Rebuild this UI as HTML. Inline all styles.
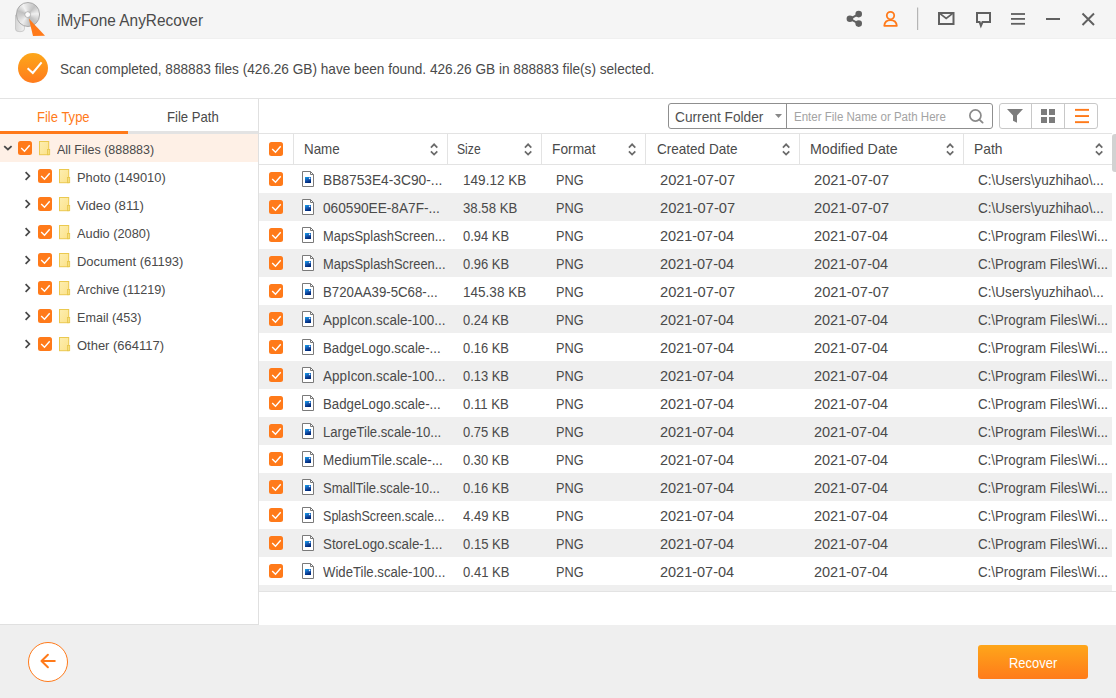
<!DOCTYPE html>
<html><head><meta charset="utf-8"><style>
*{margin:0;padding:0;box-sizing:border-box}
html,body{width:1116px;height:698px;overflow:hidden;background:#efefef;font-family:"Liberation Sans",sans-serif;color:#333}
.a{position:absolute;white-space:nowrap}
svg.a{display:block}
.t{position:absolute;white-space:nowrap;line-height:1;transform-origin:0 0}
</style></head><body>
<div class="a" style="left:0px;top:0px;width:1116px;height:39px;background:#f5f5f5;"></div>
<div class="a" style="left:0px;top:38px;width:1116px;height:1px;background:#f0f0f0;"></div>
<svg class="a" style="left:12px;top:0px" width="36" height="38" viewBox="12 0 36 38">
<defs><linearGradient id="stem" x1="0" y1="0" x2="1" y2="0"><stop offset="0" stop-color="#d4d4d4"/><stop offset="1" stop-color="#f2f2f2"/></linearGradient></defs>
<path d="M15.5 15 V29 Q15.5 31.6 19 31.6 H21 Q24.4 31.6 24.4 29 V22 Z" fill="url(#stem)" stroke="#bdbdbd" stroke-width="0.7"/>
</svg>
<div class="a" style="left:15.5px;top:2.4px;width:24.4px;height:24.4px;border-radius:50%;border:0.6px solid #a9a9a9;background:conic-gradient(from 0deg,#dcdcdc,#c2c2c2 40deg,#f0f0f0 85deg,#c6c6c6 130deg,#b9b9b9 160deg,#eeeeee 215deg,#cfcfcf 260deg,#c0c0c0 290deg,#f3f3f3 330deg,#dcdcdc)"></div>
<svg class="a" style="left:12px;top:0px" width="36" height="38" viewBox="12 0 36 38">
<circle cx="27.7" cy="14.6" r="2.9" fill="#fafafa" stroke="#a0a0a0" stroke-width="0.7"/>
<path d="M28.8 18.6 L33 36 L45 35.8 Z" fill="#ff7a1a"/>
</svg>
<svg class="a" style="left:840px;top:0px" width="276" height="38" viewBox="840 0 276 38">
<g fill="#606060"><circle cx="858.7" cy="14.1" r="3.3"/><circle cx="849.9" cy="18.8" r="3.3"/><circle cx="858.7" cy="23.6" r="3.3"/></g>
<path d="M858.7 14.1 L849.9 18.8 L858.7 23.6" fill="none" stroke="#606060" stroke-width="1.9"/>
<circle cx="890.5" cy="15.6" r="3.7" fill="none" stroke="#ff7a1a" stroke-width="1.8"/>
<path d="M884.3 25.8 Q884.8 20.2 890.5 20.2 Q896.2 20.2 896.8 25.8 Z" fill="none" stroke="#ff7a1a" stroke-width="1.8" stroke-linejoin="round"/>
<rect x="917" y="7.5" width="1.2" height="22.5" fill="#b5b5b5"/>
<rect x="939" y="13" width="14.5" height="11" fill="none" stroke="#606060" stroke-width="2"/>
<path d="M940 13.6 L946.2 18.4 L952.4 13.6" fill="none" stroke="#606060" stroke-width="1.8"/>
<path d="M977 13 H990 V22 H982.5 L980.9 25.8 L979.6 22 H977 Z" fill="none" stroke="#606060" stroke-width="2" stroke-linejoin="miter"/>
<g fill="#606060"><rect x="1011" y="13.1" width="14" height="1.8"/><rect x="1011" y="18" width="14" height="1.8"/><rect x="1011" y="22.9" width="14" height="1.8"/></g>
<rect x="1046" y="18" width="14" height="2" fill="#606060"/>
<path d="M1082.5 13.5 L1094 25 M1094 13.5 L1082.5 25" stroke="#606060" stroke-width="2"/>
</svg>
<div class="a" style="left:0px;top:39px;width:1116px;height:59px;background:#fff;"></div>
<div class="a" style="left:0px;top:98px;width:1116px;height:1px;background:#e3e3e3;"></div>
<div class="a" style="left:18px;top:53px;width:30px;height:30px;border-radius:50%;background:linear-gradient(#fda71a,#ff7b1c)"></div>
<svg class="a" style="left:18px;top:53px" width="30" height="30" viewBox="0 0 30 30"><path d="M9.6 15.2 L14.8 20 L23.6 9.3" fill="none" stroke="#fff" stroke-width="2"/></svg>
<div class="a" style="left:0px;top:99px;width:258px;height:525px;background:#fff;"></div>
<div class="a" style="left:258px;top:99px;width:1px;height:526px;background:#e0e0e0;"></div>
<div class="a" style="left:0px;top:624px;width:258px;height:1px;background:#e0e0e0;"></div>
<div class="a" style="left:128px;top:131px;width:130px;height:3px;background:#e3e3e3;"></div>
<div class="a" style="left:0px;top:131px;width:128px;height:3px;background:#ff7a1a;"></div>
<div class="a" style="left:0px;top:134px;width:258px;height:28px;background:#fef0e6;"></div>
<svg class="a" style="left:3px;top:144px" width="10" height="8" viewBox="0 0 10 8"><path d="M1.2 2.2 L4.9 5.5 L8.6 2.2" fill="none" stroke="#484848" stroke-width="1.8"/></svg>
<div class="a" style="left:18px;top:141px;width:14px;height:14px"><svg width="14" height="14" viewBox="0 0 14 14" style="display:block"><rect width="14" height="14" rx="2.5" fill="#ff7a1a"/><path d="M3.2 7.1 L6.5 10.3 L11.7 4.3" fill="none" stroke="#fff" stroke-width="1.4"/></svg></div>
<div class="a" style="left:39px;top:141px;width:12px;height:15px"><svg width="12" height="15" viewBox="0 0 12 15" style="display:block"><defs><linearGradient id="fg" x1="0" y1="0" x2="1" y2="1"><stop offset="0" stop-color="#fdeeb0"/><stop offset="1" stop-color="#fce28a"/></linearGradient></defs><rect x="0.5" y="0.5" width="9.2" height="13.2" fill="url(#fg)" stroke="#ebc94f"/><rect x="8.5" y="8.5" width="2.2" height="5.2" fill="#f7de7c" stroke="#e6c64c" stroke-width="0.8"/></svg></div>
<svg class="a" style="left:24px;top:171px" width="8" height="10" viewBox="0 0 8 10"><path d="M1.6 1.1 L5.4 5 L1.6 8.9" fill="none" stroke="#484848" stroke-width="1.7"/></svg>
<div class="a" style="left:38px;top:169px;width:14px;height:14px"><svg width="14" height="14" viewBox="0 0 14 14" style="display:block"><rect width="14" height="14" rx="2.5" fill="#ff7a1a"/><path d="M3.2 7.1 L6.5 10.3 L11.7 4.3" fill="none" stroke="#fff" stroke-width="1.4"/></svg></div>
<div class="a" style="left:59px;top:169px;width:12px;height:15px"><svg width="12" height="15" viewBox="0 0 12 15" style="display:block"><defs><linearGradient id="fg" x1="0" y1="0" x2="1" y2="1"><stop offset="0" stop-color="#fdeeb0"/><stop offset="1" stop-color="#fce28a"/></linearGradient></defs><rect x="0.5" y="0.5" width="9.2" height="13.2" fill="url(#fg)" stroke="#ebc94f"/><rect x="8.5" y="8.5" width="2.2" height="5.2" fill="#f7de7c" stroke="#e6c64c" stroke-width="0.8"/></svg></div>
<svg class="a" style="left:24px;top:199px" width="8" height="10" viewBox="0 0 8 10"><path d="M1.6 1.1 L5.4 5 L1.6 8.9" fill="none" stroke="#484848" stroke-width="1.7"/></svg>
<div class="a" style="left:38px;top:197px;width:14px;height:14px"><svg width="14" height="14" viewBox="0 0 14 14" style="display:block"><rect width="14" height="14" rx="2.5" fill="#ff7a1a"/><path d="M3.2 7.1 L6.5 10.3 L11.7 4.3" fill="none" stroke="#fff" stroke-width="1.4"/></svg></div>
<div class="a" style="left:59px;top:197px;width:12px;height:15px"><svg width="12" height="15" viewBox="0 0 12 15" style="display:block"><defs><linearGradient id="fg" x1="0" y1="0" x2="1" y2="1"><stop offset="0" stop-color="#fdeeb0"/><stop offset="1" stop-color="#fce28a"/></linearGradient></defs><rect x="0.5" y="0.5" width="9.2" height="13.2" fill="url(#fg)" stroke="#ebc94f"/><rect x="8.5" y="8.5" width="2.2" height="5.2" fill="#f7de7c" stroke="#e6c64c" stroke-width="0.8"/></svg></div>
<svg class="a" style="left:24px;top:227px" width="8" height="10" viewBox="0 0 8 10"><path d="M1.6 1.1 L5.4 5 L1.6 8.9" fill="none" stroke="#484848" stroke-width="1.7"/></svg>
<div class="a" style="left:38px;top:225px;width:14px;height:14px"><svg width="14" height="14" viewBox="0 0 14 14" style="display:block"><rect width="14" height="14" rx="2.5" fill="#ff7a1a"/><path d="M3.2 7.1 L6.5 10.3 L11.7 4.3" fill="none" stroke="#fff" stroke-width="1.4"/></svg></div>
<div class="a" style="left:59px;top:225px;width:12px;height:15px"><svg width="12" height="15" viewBox="0 0 12 15" style="display:block"><defs><linearGradient id="fg" x1="0" y1="0" x2="1" y2="1"><stop offset="0" stop-color="#fdeeb0"/><stop offset="1" stop-color="#fce28a"/></linearGradient></defs><rect x="0.5" y="0.5" width="9.2" height="13.2" fill="url(#fg)" stroke="#ebc94f"/><rect x="8.5" y="8.5" width="2.2" height="5.2" fill="#f7de7c" stroke="#e6c64c" stroke-width="0.8"/></svg></div>
<svg class="a" style="left:24px;top:255px" width="8" height="10" viewBox="0 0 8 10"><path d="M1.6 1.1 L5.4 5 L1.6 8.9" fill="none" stroke="#484848" stroke-width="1.7"/></svg>
<div class="a" style="left:38px;top:253px;width:14px;height:14px"><svg width="14" height="14" viewBox="0 0 14 14" style="display:block"><rect width="14" height="14" rx="2.5" fill="#ff7a1a"/><path d="M3.2 7.1 L6.5 10.3 L11.7 4.3" fill="none" stroke="#fff" stroke-width="1.4"/></svg></div>
<div class="a" style="left:59px;top:253px;width:12px;height:15px"><svg width="12" height="15" viewBox="0 0 12 15" style="display:block"><defs><linearGradient id="fg" x1="0" y1="0" x2="1" y2="1"><stop offset="0" stop-color="#fdeeb0"/><stop offset="1" stop-color="#fce28a"/></linearGradient></defs><rect x="0.5" y="0.5" width="9.2" height="13.2" fill="url(#fg)" stroke="#ebc94f"/><rect x="8.5" y="8.5" width="2.2" height="5.2" fill="#f7de7c" stroke="#e6c64c" stroke-width="0.8"/></svg></div>
<svg class="a" style="left:24px;top:283px" width="8" height="10" viewBox="0 0 8 10"><path d="M1.6 1.1 L5.4 5 L1.6 8.9" fill="none" stroke="#484848" stroke-width="1.7"/></svg>
<div class="a" style="left:38px;top:281px;width:14px;height:14px"><svg width="14" height="14" viewBox="0 0 14 14" style="display:block"><rect width="14" height="14" rx="2.5" fill="#ff7a1a"/><path d="M3.2 7.1 L6.5 10.3 L11.7 4.3" fill="none" stroke="#fff" stroke-width="1.4"/></svg></div>
<div class="a" style="left:59px;top:281px;width:12px;height:15px"><svg width="12" height="15" viewBox="0 0 12 15" style="display:block"><defs><linearGradient id="fg" x1="0" y1="0" x2="1" y2="1"><stop offset="0" stop-color="#fdeeb0"/><stop offset="1" stop-color="#fce28a"/></linearGradient></defs><rect x="0.5" y="0.5" width="9.2" height="13.2" fill="url(#fg)" stroke="#ebc94f"/><rect x="8.5" y="8.5" width="2.2" height="5.2" fill="#f7de7c" stroke="#e6c64c" stroke-width="0.8"/></svg></div>
<svg class="a" style="left:24px;top:311px" width="8" height="10" viewBox="0 0 8 10"><path d="M1.6 1.1 L5.4 5 L1.6 8.9" fill="none" stroke="#484848" stroke-width="1.7"/></svg>
<div class="a" style="left:38px;top:309px;width:14px;height:14px"><svg width="14" height="14" viewBox="0 0 14 14" style="display:block"><rect width="14" height="14" rx="2.5" fill="#ff7a1a"/><path d="M3.2 7.1 L6.5 10.3 L11.7 4.3" fill="none" stroke="#fff" stroke-width="1.4"/></svg></div>
<div class="a" style="left:59px;top:309px;width:12px;height:15px"><svg width="12" height="15" viewBox="0 0 12 15" style="display:block"><defs><linearGradient id="fg" x1="0" y1="0" x2="1" y2="1"><stop offset="0" stop-color="#fdeeb0"/><stop offset="1" stop-color="#fce28a"/></linearGradient></defs><rect x="0.5" y="0.5" width="9.2" height="13.2" fill="url(#fg)" stroke="#ebc94f"/><rect x="8.5" y="8.5" width="2.2" height="5.2" fill="#f7de7c" stroke="#e6c64c" stroke-width="0.8"/></svg></div>
<svg class="a" style="left:24px;top:339px" width="8" height="10" viewBox="0 0 8 10"><path d="M1.6 1.1 L5.4 5 L1.6 8.9" fill="none" stroke="#484848" stroke-width="1.7"/></svg>
<div class="a" style="left:38px;top:337px;width:14px;height:14px"><svg width="14" height="14" viewBox="0 0 14 14" style="display:block"><rect width="14" height="14" rx="2.5" fill="#ff7a1a"/><path d="M3.2 7.1 L6.5 10.3 L11.7 4.3" fill="none" stroke="#fff" stroke-width="1.4"/></svg></div>
<div class="a" style="left:59px;top:337px;width:12px;height:15px"><svg width="12" height="15" viewBox="0 0 12 15" style="display:block"><defs><linearGradient id="fg" x1="0" y1="0" x2="1" y2="1"><stop offset="0" stop-color="#fdeeb0"/><stop offset="1" stop-color="#fce28a"/></linearGradient></defs><rect x="0.5" y="0.5" width="9.2" height="13.2" fill="url(#fg)" stroke="#ebc94f"/><rect x="8.5" y="8.5" width="2.2" height="5.2" fill="#f7de7c" stroke="#e6c64c" stroke-width="0.8"/></svg></div>
<div class="a" style="left:259px;top:99px;width:857px;height:526px;background:#fff;"></div>
<div class="a" style="left:668px;top:103px;width:325px;height:26px;border:1px solid #8f8f8f;border-radius:3px;background:#fff"></div>
<div class="a" style="left:786px;top:104px;width:1px;height:24px;background:#8f8f8f;"></div>
<svg class="a" style="left:775px;top:114px" width="7" height="4" viewBox="0 0 7 4"><path d="M0 0 H7 L3.5 4 Z" fill="#888"/></svg>
<svg class="a" style="left:969px;top:109px" width="15" height="15" viewBox="0 0 15 15"><circle cx="6.4" cy="6.5" r="5.55" fill="none" stroke="#8a8a8a" stroke-width="1.7"/><path d="M10.4 10.6 L13.6 13.6" stroke="#8a8a8a" stroke-width="1.9" stroke-linecap="round"/></svg>
<div class="a" style="left:999px;top:103px;width:99px;height:26px;border:1px solid #c8c8c8;border-radius:3px;background:#fff"></div>
<div class="a" style="left:1031px;top:104px;width:1px;height:24px;background:#c8c8c8;"></div>
<div class="a" style="left:1064px;top:104px;width:1px;height:24px;background:#c8c8c8;"></div>
<svg class="a" style="left:1007px;top:109px" width="16" height="14" viewBox="0 0 16 14"><path d="M0 0 H16 L10 6.5 V13.8 L6 11.8 V6.5 Z" fill="#7c7c7c"/></svg>
<svg class="a" style="left:1041px;top:109px" width="14" height="14" viewBox="0 0 14 14"><g fill="#7c7c7c"><rect x="0" y="0" width="6" height="6"/><rect x="8" y="0" width="6" height="6"/><rect x="0" y="8" width="6" height="6"/><rect x="8" y="8" width="6" height="6"/></g></svg>
<svg class="a" style="left:1075px;top:108px" width="14" height="16" viewBox="0 0 14 16"><g fill="#ff7a1a"><rect x="0" y="0.9" width="14" height="1.9"/><rect x="0" y="7.1" width="14" height="1.9"/><rect x="0" y="13.2" width="14" height="1.9"/></g></svg>
<div class="a" style="left:259px;top:133px;width:853px;height:1px;background:#e3e3e3;"></div>
<div class="a" style="left:259px;top:164px;width:853px;height:1px;background:#e3e3e3;"></div>
<div class="a" style="left:293px;top:134px;width:1px;height:30px;background:#e3e3e3;"></div>
<div class="a" style="left:447px;top:134px;width:1px;height:30px;background:#e3e3e3;"></div>
<div class="a" style="left:541px;top:134px;width:1px;height:30px;background:#e3e3e3;"></div>
<div class="a" style="left:645px;top:134px;width:1px;height:30px;background:#e3e3e3;"></div>
<div class="a" style="left:799px;top:134px;width:1px;height:30px;background:#e3e3e3;"></div>
<div class="a" style="left:963px;top:134px;width:1px;height:30px;background:#e3e3e3;"></div>
<div class="a" style="left:269px;top:142px;width:14px;height:14px"><svg width="14" height="14" viewBox="0 0 14 14" style="display:block"><rect width="14" height="14" rx="2.5" fill="#ff7a1a"/><path d="M3.2 7.1 L6.5 10.3 L11.7 4.3" fill="none" stroke="#fff" stroke-width="1.4"/></svg></div>
<div class="a" style="left:430px;top:143px;width:9px;height:13px"><svg width="9" height="13" viewBox="0 0 9 13" style="display:block"><path d="M0.9 4.6 L4.1 1.3 L7.3 4.6 M0.9 8.3 L4.1 11.6 L7.3 8.3" fill="none" stroke="#6a6a6a" stroke-width="1.7"/></svg></div>
<div class="a" style="left:524px;top:143px;width:9px;height:13px"><svg width="9" height="13" viewBox="0 0 9 13" style="display:block"><path d="M0.9 4.6 L4.1 1.3 L7.3 4.6 M0.9 8.3 L4.1 11.6 L7.3 8.3" fill="none" stroke="#6a6a6a" stroke-width="1.7"/></svg></div>
<div class="a" style="left:628px;top:143px;width:9px;height:13px"><svg width="9" height="13" viewBox="0 0 9 13" style="display:block"><path d="M0.9 4.6 L4.1 1.3 L7.3 4.6 M0.9 8.3 L4.1 11.6 L7.3 8.3" fill="none" stroke="#6a6a6a" stroke-width="1.7"/></svg></div>
<div class="a" style="left:782px;top:143px;width:9px;height:13px"><svg width="9" height="13" viewBox="0 0 9 13" style="display:block"><path d="M0.9 4.6 L4.1 1.3 L7.3 4.6 M0.9 8.3 L4.1 11.6 L7.3 8.3" fill="none" stroke="#6a6a6a" stroke-width="1.7"/></svg></div>
<div class="a" style="left:946px;top:143px;width:9px;height:13px"><svg width="9" height="13" viewBox="0 0 9 13" style="display:block"><path d="M0.9 4.6 L4.1 1.3 L7.3 4.6 M0.9 8.3 L4.1 11.6 L7.3 8.3" fill="none" stroke="#6a6a6a" stroke-width="1.7"/></svg></div>
<div class="a" style="left:1095px;top:143px;width:9px;height:13px"><svg width="9" height="13" viewBox="0 0 9 13" style="display:block"><path d="M0.9 4.6 L4.1 1.3 L7.3 4.6 M0.9 8.3 L4.1 11.6 L7.3 8.3" fill="none" stroke="#6a6a6a" stroke-width="1.7"/></svg></div>
<div class="a" style="left:269px;top:172px;width:14px;height:14px"><svg width="14" height="14" viewBox="0 0 14 14" style="display:block"><rect width="14" height="14" rx="2.5" fill="#ff7a1a"/><path d="M3.2 7.1 L6.5 10.3 L11.7 4.3" fill="none" stroke="#fff" stroke-width="1.4"/></svg></div>
<div class="a" style="left:302px;top:171px;width:12px;height:16px"><svg width="12" height="16" viewBox="0 0 12 16" style="display:block"><defs><linearGradient id="ig" x1="0" y1="0" x2="0.4" y2="1"><stop offset="0" stop-color="#13a4ef"/><stop offset="0.55" stop-color="#1456b0"/><stop offset="1" stop-color="#002a7a"/></linearGradient></defs><path d="M0.5 0.5 H8.5 L11.5 3.5 V15.5 H0.5 Z" fill="#fff" stroke="#7a7a7a" stroke-linejoin="miter"/><path d="M8.5 0.5 V3.5 H11.5" fill="none" stroke="#7a7a7a" stroke-linejoin="miter"/><rect x="3" y="6" width="6" height="6" fill="url(#ig)"/><circle cx="7.6" cy="7.4" r="0.8" fill="#e8f0ff"/></svg></div>
<div class="a" style="left:259px;top:193px;width:853px;height:28px;background:#efefef;"></div>
<div class="a" style="left:269px;top:200px;width:14px;height:14px"><svg width="14" height="14" viewBox="0 0 14 14" style="display:block"><rect width="14" height="14" rx="2.5" fill="#ff7a1a"/><path d="M3.2 7.1 L6.5 10.3 L11.7 4.3" fill="none" stroke="#fff" stroke-width="1.4"/></svg></div>
<div class="a" style="left:302px;top:199px;width:12px;height:16px"><svg width="12" height="16" viewBox="0 0 12 16" style="display:block"><defs><linearGradient id="ig" x1="0" y1="0" x2="0.4" y2="1"><stop offset="0" stop-color="#13a4ef"/><stop offset="0.55" stop-color="#1456b0"/><stop offset="1" stop-color="#002a7a"/></linearGradient></defs><path d="M0.5 0.5 H8.5 L11.5 3.5 V15.5 H0.5 Z" fill="#fff" stroke="#7a7a7a" stroke-linejoin="miter"/><path d="M8.5 0.5 V3.5 H11.5" fill="none" stroke="#7a7a7a" stroke-linejoin="miter"/><rect x="3" y="6" width="6" height="6" fill="url(#ig)"/><circle cx="7.6" cy="7.4" r="0.8" fill="#e8f0ff"/></svg></div>
<div class="a" style="left:269px;top:228px;width:14px;height:14px"><svg width="14" height="14" viewBox="0 0 14 14" style="display:block"><rect width="14" height="14" rx="2.5" fill="#ff7a1a"/><path d="M3.2 7.1 L6.5 10.3 L11.7 4.3" fill="none" stroke="#fff" stroke-width="1.4"/></svg></div>
<div class="a" style="left:302px;top:227px;width:12px;height:16px"><svg width="12" height="16" viewBox="0 0 12 16" style="display:block"><defs><linearGradient id="ig" x1="0" y1="0" x2="0.4" y2="1"><stop offset="0" stop-color="#13a4ef"/><stop offset="0.55" stop-color="#1456b0"/><stop offset="1" stop-color="#002a7a"/></linearGradient></defs><path d="M0.5 0.5 H8.5 L11.5 3.5 V15.5 H0.5 Z" fill="#fff" stroke="#7a7a7a" stroke-linejoin="miter"/><path d="M8.5 0.5 V3.5 H11.5" fill="none" stroke="#7a7a7a" stroke-linejoin="miter"/><rect x="3" y="6" width="6" height="6" fill="url(#ig)"/><circle cx="7.6" cy="7.4" r="0.8" fill="#e8f0ff"/></svg></div>
<div class="a" style="left:259px;top:249px;width:853px;height:28px;background:#efefef;"></div>
<div class="a" style="left:269px;top:256px;width:14px;height:14px"><svg width="14" height="14" viewBox="0 0 14 14" style="display:block"><rect width="14" height="14" rx="2.5" fill="#ff7a1a"/><path d="M3.2 7.1 L6.5 10.3 L11.7 4.3" fill="none" stroke="#fff" stroke-width="1.4"/></svg></div>
<div class="a" style="left:302px;top:255px;width:12px;height:16px"><svg width="12" height="16" viewBox="0 0 12 16" style="display:block"><defs><linearGradient id="ig" x1="0" y1="0" x2="0.4" y2="1"><stop offset="0" stop-color="#13a4ef"/><stop offset="0.55" stop-color="#1456b0"/><stop offset="1" stop-color="#002a7a"/></linearGradient></defs><path d="M0.5 0.5 H8.5 L11.5 3.5 V15.5 H0.5 Z" fill="#fff" stroke="#7a7a7a" stroke-linejoin="miter"/><path d="M8.5 0.5 V3.5 H11.5" fill="none" stroke="#7a7a7a" stroke-linejoin="miter"/><rect x="3" y="6" width="6" height="6" fill="url(#ig)"/><circle cx="7.6" cy="7.4" r="0.8" fill="#e8f0ff"/></svg></div>
<div class="a" style="left:269px;top:284px;width:14px;height:14px"><svg width="14" height="14" viewBox="0 0 14 14" style="display:block"><rect width="14" height="14" rx="2.5" fill="#ff7a1a"/><path d="M3.2 7.1 L6.5 10.3 L11.7 4.3" fill="none" stroke="#fff" stroke-width="1.4"/></svg></div>
<div class="a" style="left:302px;top:283px;width:12px;height:16px"><svg width="12" height="16" viewBox="0 0 12 16" style="display:block"><defs><linearGradient id="ig" x1="0" y1="0" x2="0.4" y2="1"><stop offset="0" stop-color="#13a4ef"/><stop offset="0.55" stop-color="#1456b0"/><stop offset="1" stop-color="#002a7a"/></linearGradient></defs><path d="M0.5 0.5 H8.5 L11.5 3.5 V15.5 H0.5 Z" fill="#fff" stroke="#7a7a7a" stroke-linejoin="miter"/><path d="M8.5 0.5 V3.5 H11.5" fill="none" stroke="#7a7a7a" stroke-linejoin="miter"/><rect x="3" y="6" width="6" height="6" fill="url(#ig)"/><circle cx="7.6" cy="7.4" r="0.8" fill="#e8f0ff"/></svg></div>
<div class="a" style="left:259px;top:305px;width:853px;height:28px;background:#efefef;"></div>
<div class="a" style="left:269px;top:312px;width:14px;height:14px"><svg width="14" height="14" viewBox="0 0 14 14" style="display:block"><rect width="14" height="14" rx="2.5" fill="#ff7a1a"/><path d="M3.2 7.1 L6.5 10.3 L11.7 4.3" fill="none" stroke="#fff" stroke-width="1.4"/></svg></div>
<div class="a" style="left:302px;top:311px;width:12px;height:16px"><svg width="12" height="16" viewBox="0 0 12 16" style="display:block"><defs><linearGradient id="ig" x1="0" y1="0" x2="0.4" y2="1"><stop offset="0" stop-color="#13a4ef"/><stop offset="0.55" stop-color="#1456b0"/><stop offset="1" stop-color="#002a7a"/></linearGradient></defs><path d="M0.5 0.5 H8.5 L11.5 3.5 V15.5 H0.5 Z" fill="#fff" stroke="#7a7a7a" stroke-linejoin="miter"/><path d="M8.5 0.5 V3.5 H11.5" fill="none" stroke="#7a7a7a" stroke-linejoin="miter"/><rect x="3" y="6" width="6" height="6" fill="url(#ig)"/><circle cx="7.6" cy="7.4" r="0.8" fill="#e8f0ff"/></svg></div>
<div class="a" style="left:269px;top:340px;width:14px;height:14px"><svg width="14" height="14" viewBox="0 0 14 14" style="display:block"><rect width="14" height="14" rx="2.5" fill="#ff7a1a"/><path d="M3.2 7.1 L6.5 10.3 L11.7 4.3" fill="none" stroke="#fff" stroke-width="1.4"/></svg></div>
<div class="a" style="left:302px;top:339px;width:12px;height:16px"><svg width="12" height="16" viewBox="0 0 12 16" style="display:block"><defs><linearGradient id="ig" x1="0" y1="0" x2="0.4" y2="1"><stop offset="0" stop-color="#13a4ef"/><stop offset="0.55" stop-color="#1456b0"/><stop offset="1" stop-color="#002a7a"/></linearGradient></defs><path d="M0.5 0.5 H8.5 L11.5 3.5 V15.5 H0.5 Z" fill="#fff" stroke="#7a7a7a" stroke-linejoin="miter"/><path d="M8.5 0.5 V3.5 H11.5" fill="none" stroke="#7a7a7a" stroke-linejoin="miter"/><rect x="3" y="6" width="6" height="6" fill="url(#ig)"/><circle cx="7.6" cy="7.4" r="0.8" fill="#e8f0ff"/></svg></div>
<div class="a" style="left:259px;top:361px;width:853px;height:28px;background:#efefef;"></div>
<div class="a" style="left:269px;top:368px;width:14px;height:14px"><svg width="14" height="14" viewBox="0 0 14 14" style="display:block"><rect width="14" height="14" rx="2.5" fill="#ff7a1a"/><path d="M3.2 7.1 L6.5 10.3 L11.7 4.3" fill="none" stroke="#fff" stroke-width="1.4"/></svg></div>
<div class="a" style="left:302px;top:367px;width:12px;height:16px"><svg width="12" height="16" viewBox="0 0 12 16" style="display:block"><defs><linearGradient id="ig" x1="0" y1="0" x2="0.4" y2="1"><stop offset="0" stop-color="#13a4ef"/><stop offset="0.55" stop-color="#1456b0"/><stop offset="1" stop-color="#002a7a"/></linearGradient></defs><path d="M0.5 0.5 H8.5 L11.5 3.5 V15.5 H0.5 Z" fill="#fff" stroke="#7a7a7a" stroke-linejoin="miter"/><path d="M8.5 0.5 V3.5 H11.5" fill="none" stroke="#7a7a7a" stroke-linejoin="miter"/><rect x="3" y="6" width="6" height="6" fill="url(#ig)"/><circle cx="7.6" cy="7.4" r="0.8" fill="#e8f0ff"/></svg></div>
<div class="a" style="left:269px;top:396px;width:14px;height:14px"><svg width="14" height="14" viewBox="0 0 14 14" style="display:block"><rect width="14" height="14" rx="2.5" fill="#ff7a1a"/><path d="M3.2 7.1 L6.5 10.3 L11.7 4.3" fill="none" stroke="#fff" stroke-width="1.4"/></svg></div>
<div class="a" style="left:302px;top:395px;width:12px;height:16px"><svg width="12" height="16" viewBox="0 0 12 16" style="display:block"><defs><linearGradient id="ig" x1="0" y1="0" x2="0.4" y2="1"><stop offset="0" stop-color="#13a4ef"/><stop offset="0.55" stop-color="#1456b0"/><stop offset="1" stop-color="#002a7a"/></linearGradient></defs><path d="M0.5 0.5 H8.5 L11.5 3.5 V15.5 H0.5 Z" fill="#fff" stroke="#7a7a7a" stroke-linejoin="miter"/><path d="M8.5 0.5 V3.5 H11.5" fill="none" stroke="#7a7a7a" stroke-linejoin="miter"/><rect x="3" y="6" width="6" height="6" fill="url(#ig)"/><circle cx="7.6" cy="7.4" r="0.8" fill="#e8f0ff"/></svg></div>
<div class="a" style="left:259px;top:417px;width:853px;height:28px;background:#efefef;"></div>
<div class="a" style="left:269px;top:424px;width:14px;height:14px"><svg width="14" height="14" viewBox="0 0 14 14" style="display:block"><rect width="14" height="14" rx="2.5" fill="#ff7a1a"/><path d="M3.2 7.1 L6.5 10.3 L11.7 4.3" fill="none" stroke="#fff" stroke-width="1.4"/></svg></div>
<div class="a" style="left:302px;top:423px;width:12px;height:16px"><svg width="12" height="16" viewBox="0 0 12 16" style="display:block"><defs><linearGradient id="ig" x1="0" y1="0" x2="0.4" y2="1"><stop offset="0" stop-color="#13a4ef"/><stop offset="0.55" stop-color="#1456b0"/><stop offset="1" stop-color="#002a7a"/></linearGradient></defs><path d="M0.5 0.5 H8.5 L11.5 3.5 V15.5 H0.5 Z" fill="#fff" stroke="#7a7a7a" stroke-linejoin="miter"/><path d="M8.5 0.5 V3.5 H11.5" fill="none" stroke="#7a7a7a" stroke-linejoin="miter"/><rect x="3" y="6" width="6" height="6" fill="url(#ig)"/><circle cx="7.6" cy="7.4" r="0.8" fill="#e8f0ff"/></svg></div>
<div class="a" style="left:269px;top:452px;width:14px;height:14px"><svg width="14" height="14" viewBox="0 0 14 14" style="display:block"><rect width="14" height="14" rx="2.5" fill="#ff7a1a"/><path d="M3.2 7.1 L6.5 10.3 L11.7 4.3" fill="none" stroke="#fff" stroke-width="1.4"/></svg></div>
<div class="a" style="left:302px;top:451px;width:12px;height:16px"><svg width="12" height="16" viewBox="0 0 12 16" style="display:block"><defs><linearGradient id="ig" x1="0" y1="0" x2="0.4" y2="1"><stop offset="0" stop-color="#13a4ef"/><stop offset="0.55" stop-color="#1456b0"/><stop offset="1" stop-color="#002a7a"/></linearGradient></defs><path d="M0.5 0.5 H8.5 L11.5 3.5 V15.5 H0.5 Z" fill="#fff" stroke="#7a7a7a" stroke-linejoin="miter"/><path d="M8.5 0.5 V3.5 H11.5" fill="none" stroke="#7a7a7a" stroke-linejoin="miter"/><rect x="3" y="6" width="6" height="6" fill="url(#ig)"/><circle cx="7.6" cy="7.4" r="0.8" fill="#e8f0ff"/></svg></div>
<div class="a" style="left:259px;top:473px;width:853px;height:28px;background:#efefef;"></div>
<div class="a" style="left:269px;top:480px;width:14px;height:14px"><svg width="14" height="14" viewBox="0 0 14 14" style="display:block"><rect width="14" height="14" rx="2.5" fill="#ff7a1a"/><path d="M3.2 7.1 L6.5 10.3 L11.7 4.3" fill="none" stroke="#fff" stroke-width="1.4"/></svg></div>
<div class="a" style="left:302px;top:479px;width:12px;height:16px"><svg width="12" height="16" viewBox="0 0 12 16" style="display:block"><defs><linearGradient id="ig" x1="0" y1="0" x2="0.4" y2="1"><stop offset="0" stop-color="#13a4ef"/><stop offset="0.55" stop-color="#1456b0"/><stop offset="1" stop-color="#002a7a"/></linearGradient></defs><path d="M0.5 0.5 H8.5 L11.5 3.5 V15.5 H0.5 Z" fill="#fff" stroke="#7a7a7a" stroke-linejoin="miter"/><path d="M8.5 0.5 V3.5 H11.5" fill="none" stroke="#7a7a7a" stroke-linejoin="miter"/><rect x="3" y="6" width="6" height="6" fill="url(#ig)"/><circle cx="7.6" cy="7.4" r="0.8" fill="#e8f0ff"/></svg></div>
<div class="a" style="left:269px;top:508px;width:14px;height:14px"><svg width="14" height="14" viewBox="0 0 14 14" style="display:block"><rect width="14" height="14" rx="2.5" fill="#ff7a1a"/><path d="M3.2 7.1 L6.5 10.3 L11.7 4.3" fill="none" stroke="#fff" stroke-width="1.4"/></svg></div>
<div class="a" style="left:302px;top:507px;width:12px;height:16px"><svg width="12" height="16" viewBox="0 0 12 16" style="display:block"><defs><linearGradient id="ig" x1="0" y1="0" x2="0.4" y2="1"><stop offset="0" stop-color="#13a4ef"/><stop offset="0.55" stop-color="#1456b0"/><stop offset="1" stop-color="#002a7a"/></linearGradient></defs><path d="M0.5 0.5 H8.5 L11.5 3.5 V15.5 H0.5 Z" fill="#fff" stroke="#7a7a7a" stroke-linejoin="miter"/><path d="M8.5 0.5 V3.5 H11.5" fill="none" stroke="#7a7a7a" stroke-linejoin="miter"/><rect x="3" y="6" width="6" height="6" fill="url(#ig)"/><circle cx="7.6" cy="7.4" r="0.8" fill="#e8f0ff"/></svg></div>
<div class="a" style="left:259px;top:529px;width:853px;height:28px;background:#efefef;"></div>
<div class="a" style="left:269px;top:536px;width:14px;height:14px"><svg width="14" height="14" viewBox="0 0 14 14" style="display:block"><rect width="14" height="14" rx="2.5" fill="#ff7a1a"/><path d="M3.2 7.1 L6.5 10.3 L11.7 4.3" fill="none" stroke="#fff" stroke-width="1.4"/></svg></div>
<div class="a" style="left:302px;top:535px;width:12px;height:16px"><svg width="12" height="16" viewBox="0 0 12 16" style="display:block"><defs><linearGradient id="ig" x1="0" y1="0" x2="0.4" y2="1"><stop offset="0" stop-color="#13a4ef"/><stop offset="0.55" stop-color="#1456b0"/><stop offset="1" stop-color="#002a7a"/></linearGradient></defs><path d="M0.5 0.5 H8.5 L11.5 3.5 V15.5 H0.5 Z" fill="#fff" stroke="#7a7a7a" stroke-linejoin="miter"/><path d="M8.5 0.5 V3.5 H11.5" fill="none" stroke="#7a7a7a" stroke-linejoin="miter"/><rect x="3" y="6" width="6" height="6" fill="url(#ig)"/><circle cx="7.6" cy="7.4" r="0.8" fill="#e8f0ff"/></svg></div>
<div class="a" style="left:269px;top:564px;width:14px;height:14px"><svg width="14" height="14" viewBox="0 0 14 14" style="display:block"><rect width="14" height="14" rx="2.5" fill="#ff7a1a"/><path d="M3.2 7.1 L6.5 10.3 L11.7 4.3" fill="none" stroke="#fff" stroke-width="1.4"/></svg></div>
<div class="a" style="left:302px;top:563px;width:12px;height:16px"><svg width="12" height="16" viewBox="0 0 12 16" style="display:block"><defs><linearGradient id="ig" x1="0" y1="0" x2="0.4" y2="1"><stop offset="0" stop-color="#13a4ef"/><stop offset="0.55" stop-color="#1456b0"/><stop offset="1" stop-color="#002a7a"/></linearGradient></defs><path d="M0.5 0.5 H8.5 L11.5 3.5 V15.5 H0.5 Z" fill="#fff" stroke="#7a7a7a" stroke-linejoin="miter"/><path d="M8.5 0.5 V3.5 H11.5" fill="none" stroke="#7a7a7a" stroke-linejoin="miter"/><rect x="3" y="6" width="6" height="6" fill="url(#ig)"/><circle cx="7.6" cy="7.4" r="0.8" fill="#e8f0ff"/></svg></div>
<div class="a" style="left:259px;top:585px;width:853px;height:6px;background:#efefef;"></div>
<div class="a" style="left:259px;top:591px;width:857px;height:1px;background:#e3e3e3;"></div>
<div class="a" style="left:1112px;top:134px;width:4px;height:38px;border-radius:3px 0 0 3px;background:#d2d2d2"></div>
<div class="a" style="left:28px;top:642px;width:40px;height:40px;border-radius:50%;border:1px solid #ff7a1a;background:#fff"></div>
<svg class="a" style="left:28px;top:642px" width="40" height="40" viewBox="0 0 40 40"><path d="M19.9 12.8 L13.5 19 L19.9 25.2 M13.5 19 H26.8" fill="none" stroke="#ff7a1a" stroke-width="2" stroke-linecap="round" stroke-linejoin="round"/></svg>
<div class="a" style="left:978px;top:645px;width:110px;height:34px;border-radius:3px;background:linear-gradient(#fea61a,#ff7b1a)"></div>
<div class="t" style="left:56.93px;top:13.00px;font-size:15.84px;color:#4a4a4a;transform:scaleX(0.9707)">iMyFone AnyRecover</div>
<div class="t" style="left:59.93px;top:62.00px;font-size:14.1px;color:#4a4a4a;transform:scaleX(0.9675)">Scan completed, 888883 files (426.26 GB) have been found. 426.26 GB in 888883 file(s) selected.</div>
<div class="t" style="left:36.60px;top:110.00px;font-size:14.54px;color:#ff7a1a;transform:scaleX(0.8965)">File Type</div>
<div class="t" style="left:166.70px;top:110.00px;font-size:14.54px;color:#4a4a4a;transform:scaleX(0.9036)">File Path</div>
<div class="t" style="left:57.20px;top:144.00px;font-size:12.94px;color:#4a4a4a;transform:scaleX(0.9650)">All Files (888883)</div>
<div class="t" style="left:76.98px;top:172.00px;font-size:12.94px;color:#4a4a4a;transform:scaleX(0.9943)">Photo (149010)</div>
<div class="t" style="left:76.98px;top:200.00px;font-size:12.94px;color:#4a4a4a;transform:scaleX(1.0200)">Video (811)</div>
<div class="t" style="left:76.98px;top:228.00px;font-size:12.94px;color:#4a4a4a;transform:scaleX(0.9878)">Audio (2080)</div>
<div class="t" style="left:76.98px;top:256.00px;font-size:12.94px;color:#4a4a4a;transform:scaleX(1.0019)">Document (61193)</div>
<div class="t" style="left:76.98px;top:284.00px;font-size:12.94px;color:#4a4a4a;transform:scaleX(0.9800)">Archive (11219)</div>
<div class="t" style="left:76.98px;top:312.00px;font-size:12.94px;color:#4a4a4a;transform:scaleX(0.9738)">Email (453)</div>
<div class="t" style="left:76.98px;top:340.00px;font-size:12.94px;color:#4a4a4a;transform:scaleX(1.0023)">Other (664117)</div>
<div class="t" style="left:675.30px;top:110.00px;font-size:14.24px;color:#505050;transform:scaleX(0.9630)">Current Folder</div>
<div class="t" style="left:793.88px;top:111.00px;font-size:12.5px;color:#a3a3a3;transform:scaleX(0.9220)">Enter File Name or Path Here</div>
<div class="t" style="left:303.78px;top:142.00px;font-size:14.54px;color:#4a4a4a;transform:scaleX(0.9211)">Name</div>
<div class="t" style="left:457.46px;top:142.00px;font-size:14.54px;color:#4a4a4a;transform:scaleX(0.8370)">Size</div>
<div class="t" style="left:551.95px;top:142.00px;font-size:14.54px;color:#4a4a4a;transform:scaleX(0.9467)">Format</div>
<div class="t" style="left:656.60px;top:142.00px;font-size:14.54px;color:#4a4a4a;transform:scaleX(0.9314)">Created Date</div>
<div class="t" style="left:809.77px;top:142.00px;font-size:14.54px;color:#4a4a4a;transform:scaleX(0.9773)">Modified Date</div>
<div class="t" style="left:973.75px;top:142.00px;font-size:14.54px;color:#4a4a4a;transform:scaleX(0.9500)">Path</div>
<div class="t" style="left:322.85px;top:173.00px;font-size:14.39px;color:#4a4a4a;transform:scaleX(0.9569)">BB8753E4-3C90-...</div>
<div class="t" style="left:462.57px;top:173.00px;font-size:14.39px;color:#4a4a4a;transform:scaleX(0.9439)">149.12 KB</div>
<div class="t" style="left:555.91px;top:173.00px;font-size:14.39px;color:#4a4a4a;transform:scaleX(0.8867)">PNG</div>
<div class="t" style="left:659.90px;top:173.00px;font-size:14.39px;color:#4a4a4a;transform:scaleX(1.0219)">2021-07-07</div>
<div class="t" style="left:814.00px;top:173.00px;font-size:14.39px;color:#4a4a4a;transform:scaleX(1.0219)">2021-07-07</div>
<div class="t" style="left:978.46px;top:173.00px;font-size:14.39px;color:#4a4a4a;transform:scaleX(0.9429)">C:\Users\yuzhihao\...</div>
<div class="t" style="left:322.85px;top:201.00px;font-size:14.39px;color:#4a4a4a;transform:scaleX(0.9500)">060590EE-8A7F-...</div>
<div class="t" style="left:462.57px;top:201.00px;font-size:14.39px;color:#4a4a4a;transform:scaleX(0.9169)">38.58 KB</div>
<div class="t" style="left:555.91px;top:201.00px;font-size:14.39px;color:#4a4a4a;transform:scaleX(0.8867)">PNG</div>
<div class="t" style="left:659.90px;top:201.00px;font-size:14.39px;color:#4a4a4a;transform:scaleX(1.0219)">2021-07-07</div>
<div class="t" style="left:814.00px;top:201.00px;font-size:14.39px;color:#4a4a4a;transform:scaleX(1.0219)">2021-07-07</div>
<div class="t" style="left:978.46px;top:201.00px;font-size:14.39px;color:#4a4a4a;transform:scaleX(0.9429)">C:\Users\yuzhihao\...</div>
<div class="t" style="left:322.85px;top:229.00px;font-size:14.39px;color:#4a4a4a;transform:scaleX(0.8963)">MapsSplashScreen...</div>
<div class="t" style="left:462.57px;top:229.00px;font-size:14.39px;color:#4a4a4a;transform:scaleX(0.9020)">0.94 KB</div>
<div class="t" style="left:555.91px;top:229.00px;font-size:14.39px;color:#4a4a4a;transform:scaleX(0.8867)">PNG</div>
<div class="t" style="left:659.90px;top:229.00px;font-size:14.39px;color:#4a4a4a;transform:scaleX(1.0081)">2021-07-04</div>
<div class="t" style="left:814.00px;top:229.00px;font-size:14.39px;color:#4a4a4a;transform:scaleX(1.0081)">2021-07-04</div>
<div class="t" style="left:978.46px;top:229.00px;font-size:14.39px;color:#4a4a4a;transform:scaleX(0.9250)">C:\Program Files\Wi...</div>
<div class="t" style="left:322.85px;top:257.00px;font-size:14.39px;color:#4a4a4a;transform:scaleX(0.8963)">MapsSplashScreen...</div>
<div class="t" style="left:462.57px;top:257.00px;font-size:14.39px;color:#4a4a4a;transform:scaleX(0.9020)">0.96 KB</div>
<div class="t" style="left:555.91px;top:257.00px;font-size:14.39px;color:#4a4a4a;transform:scaleX(0.8867)">PNG</div>
<div class="t" style="left:659.90px;top:257.00px;font-size:14.39px;color:#4a4a4a;transform:scaleX(1.0081)">2021-07-04</div>
<div class="t" style="left:814.00px;top:257.00px;font-size:14.39px;color:#4a4a4a;transform:scaleX(1.0081)">2021-07-04</div>
<div class="t" style="left:978.46px;top:257.00px;font-size:14.39px;color:#4a4a4a;transform:scaleX(0.9250)">C:\Program Files\Wi...</div>
<div class="t" style="left:322.85px;top:285.00px;font-size:14.39px;color:#4a4a4a;transform:scaleX(0.9199)">B720AA39-5C68-...</div>
<div class="t" style="left:462.57px;top:285.00px;font-size:14.39px;color:#4a4a4a;transform:scaleX(0.9424)">145.38 KB</div>
<div class="t" style="left:555.91px;top:285.00px;font-size:14.39px;color:#4a4a4a;transform:scaleX(0.8867)">PNG</div>
<div class="t" style="left:659.90px;top:285.00px;font-size:14.39px;color:#4a4a4a;transform:scaleX(1.0219)">2021-07-07</div>
<div class="t" style="left:814.00px;top:285.00px;font-size:14.39px;color:#4a4a4a;transform:scaleX(1.0219)">2021-07-07</div>
<div class="t" style="left:978.46px;top:285.00px;font-size:14.39px;color:#4a4a4a;transform:scaleX(0.9429)">C:\Users\yuzhihao\...</div>
<div class="t" style="left:322.85px;top:313.00px;font-size:14.39px;color:#4a4a4a;transform:scaleX(0.9346)">AppIcon.scale-100...</div>
<div class="t" style="left:462.57px;top:313.00px;font-size:14.39px;color:#4a4a4a;transform:scaleX(0.8980)">0.24 KB</div>
<div class="t" style="left:555.91px;top:313.00px;font-size:14.39px;color:#4a4a4a;transform:scaleX(0.8867)">PNG</div>
<div class="t" style="left:659.90px;top:313.00px;font-size:14.39px;color:#4a4a4a;transform:scaleX(1.0081)">2021-07-04</div>
<div class="t" style="left:814.00px;top:313.00px;font-size:14.39px;color:#4a4a4a;transform:scaleX(1.0081)">2021-07-04</div>
<div class="t" style="left:978.46px;top:313.00px;font-size:14.39px;color:#4a4a4a;transform:scaleX(0.9250)">C:\Program Files\Wi...</div>
<div class="t" style="left:322.85px;top:341.00px;font-size:14.39px;color:#4a4a4a;transform:scaleX(0.9198)">BadgeLogo.scale-...</div>
<div class="t" style="left:462.57px;top:341.00px;font-size:14.39px;color:#4a4a4a;transform:scaleX(0.8980)">0.16 KB</div>
<div class="t" style="left:555.91px;top:341.00px;font-size:14.39px;color:#4a4a4a;transform:scaleX(0.8867)">PNG</div>
<div class="t" style="left:659.90px;top:341.00px;font-size:14.39px;color:#4a4a4a;transform:scaleX(1.0081)">2021-07-04</div>
<div class="t" style="left:814.00px;top:341.00px;font-size:14.39px;color:#4a4a4a;transform:scaleX(1.0081)">2021-07-04</div>
<div class="t" style="left:978.46px;top:341.00px;font-size:14.39px;color:#4a4a4a;transform:scaleX(0.9250)">C:\Program Files\Wi...</div>
<div class="t" style="left:322.85px;top:369.00px;font-size:14.39px;color:#4a4a4a;transform:scaleX(0.9346)">AppIcon.scale-100...</div>
<div class="t" style="left:462.57px;top:369.00px;font-size:14.39px;color:#4a4a4a;transform:scaleX(0.8980)">0.13 KB</div>
<div class="t" style="left:555.91px;top:369.00px;font-size:14.39px;color:#4a4a4a;transform:scaleX(0.8867)">PNG</div>
<div class="t" style="left:659.90px;top:369.00px;font-size:14.39px;color:#4a4a4a;transform:scaleX(1.0081)">2021-07-04</div>
<div class="t" style="left:814.00px;top:369.00px;font-size:14.39px;color:#4a4a4a;transform:scaleX(1.0081)">2021-07-04</div>
<div class="t" style="left:978.46px;top:369.00px;font-size:14.39px;color:#4a4a4a;transform:scaleX(0.9250)">C:\Program Files\Wi...</div>
<div class="t" style="left:322.85px;top:397.00px;font-size:14.39px;color:#4a4a4a;transform:scaleX(0.9198)">BadgeLogo.scale-...</div>
<div class="t" style="left:462.57px;top:397.00px;font-size:14.39px;color:#4a4a4a;transform:scaleX(0.9160)">0.11 KB</div>
<div class="t" style="left:555.91px;top:397.00px;font-size:14.39px;color:#4a4a4a;transform:scaleX(0.8867)">PNG</div>
<div class="t" style="left:659.90px;top:397.00px;font-size:14.39px;color:#4a4a4a;transform:scaleX(1.0081)">2021-07-04</div>
<div class="t" style="left:814.00px;top:397.00px;font-size:14.39px;color:#4a4a4a;transform:scaleX(1.0081)">2021-07-04</div>
<div class="t" style="left:978.46px;top:397.00px;font-size:14.39px;color:#4a4a4a;transform:scaleX(0.9250)">C:\Program Files\Wi...</div>
<div class="t" style="left:322.85px;top:425.00px;font-size:14.39px;color:#4a4a4a;transform:scaleX(0.9117)">LargeTile.scale-10...</div>
<div class="t" style="left:462.57px;top:425.00px;font-size:14.39px;color:#4a4a4a;transform:scaleX(0.9020)">0.75 KB</div>
<div class="t" style="left:555.91px;top:425.00px;font-size:14.39px;color:#4a4a4a;transform:scaleX(0.8867)">PNG</div>
<div class="t" style="left:659.90px;top:425.00px;font-size:14.39px;color:#4a4a4a;transform:scaleX(1.0081)">2021-07-04</div>
<div class="t" style="left:814.00px;top:425.00px;font-size:14.39px;color:#4a4a4a;transform:scaleX(1.0081)">2021-07-04</div>
<div class="t" style="left:978.46px;top:425.00px;font-size:14.39px;color:#4a4a4a;transform:scaleX(0.9250)">C:\Program Files\Wi...</div>
<div class="t" style="left:322.85px;top:453.00px;font-size:14.39px;color:#4a4a4a;transform:scaleX(0.9357)">MediumTile.scale-...</div>
<div class="t" style="left:462.57px;top:453.00px;font-size:14.39px;color:#4a4a4a;transform:scaleX(0.9020)">0.30 KB</div>
<div class="t" style="left:555.91px;top:453.00px;font-size:14.39px;color:#4a4a4a;transform:scaleX(0.8867)">PNG</div>
<div class="t" style="left:659.90px;top:453.00px;font-size:14.39px;color:#4a4a4a;transform:scaleX(1.0081)">2021-07-04</div>
<div class="t" style="left:814.00px;top:453.00px;font-size:14.39px;color:#4a4a4a;transform:scaleX(1.0081)">2021-07-04</div>
<div class="t" style="left:978.46px;top:453.00px;font-size:14.39px;color:#4a4a4a;transform:scaleX(0.9250)">C:\Program Files\Wi...</div>
<div class="t" style="left:322.85px;top:481.00px;font-size:14.39px;color:#4a4a4a;transform:scaleX(0.9063)">SmallTile.scale-10...</div>
<div class="t" style="left:462.57px;top:481.00px;font-size:14.39px;color:#4a4a4a;transform:scaleX(0.9020)">0.16 KB</div>
<div class="t" style="left:555.91px;top:481.00px;font-size:14.39px;color:#4a4a4a;transform:scaleX(0.8867)">PNG</div>
<div class="t" style="left:659.90px;top:481.00px;font-size:14.39px;color:#4a4a4a;transform:scaleX(1.0081)">2021-07-04</div>
<div class="t" style="left:814.00px;top:481.00px;font-size:14.39px;color:#4a4a4a;transform:scaleX(1.0081)">2021-07-04</div>
<div class="t" style="left:978.46px;top:481.00px;font-size:14.39px;color:#4a4a4a;transform:scaleX(0.9250)">C:\Program Files\Wi...</div>
<div class="t" style="left:322.85px;top:509.00px;font-size:14.39px;color:#4a4a4a;transform:scaleX(0.8737)">SplashScreen.scale...</div>
<div class="t" style="left:462.57px;top:509.00px;font-size:14.39px;color:#4a4a4a;transform:scaleX(0.9078)">4.49 KB</div>
<div class="t" style="left:555.91px;top:509.00px;font-size:14.39px;color:#4a4a4a;transform:scaleX(0.8867)">PNG</div>
<div class="t" style="left:659.90px;top:509.00px;font-size:14.39px;color:#4a4a4a;transform:scaleX(1.0081)">2021-07-04</div>
<div class="t" style="left:814.00px;top:509.00px;font-size:14.39px;color:#4a4a4a;transform:scaleX(1.0081)">2021-07-04</div>
<div class="t" style="left:978.46px;top:509.00px;font-size:14.39px;color:#4a4a4a;transform:scaleX(0.9250)">C:\Program Files\Wi...</div>
<div class="t" style="left:322.85px;top:537.00px;font-size:14.39px;color:#4a4a4a;transform:scaleX(0.9276)">StoreLogo.scale-1...</div>
<div class="t" style="left:462.57px;top:537.00px;font-size:14.39px;color:#4a4a4a;transform:scaleX(0.9078)">0.15 KB</div>
<div class="t" style="left:555.91px;top:537.00px;font-size:14.39px;color:#4a4a4a;transform:scaleX(0.8867)">PNG</div>
<div class="t" style="left:659.90px;top:537.00px;font-size:14.39px;color:#4a4a4a;transform:scaleX(1.0081)">2021-07-04</div>
<div class="t" style="left:814.00px;top:537.00px;font-size:14.39px;color:#4a4a4a;transform:scaleX(1.0081)">2021-07-04</div>
<div class="t" style="left:978.46px;top:537.00px;font-size:14.39px;color:#4a4a4a;transform:scaleX(0.9250)">C:\Program Files\Wi...</div>
<div class="t" style="left:322.85px;top:565.00px;font-size:14.39px;color:#4a4a4a;transform:scaleX(0.9150)">WideTile.scale-100...</div>
<div class="t" style="left:462.57px;top:565.00px;font-size:14.39px;color:#4a4a4a;transform:scaleX(0.9078)">0.41 KB</div>
<div class="t" style="left:555.91px;top:565.00px;font-size:14.39px;color:#4a4a4a;transform:scaleX(0.8867)">PNG</div>
<div class="t" style="left:659.90px;top:565.00px;font-size:14.39px;color:#4a4a4a;transform:scaleX(1.0081)">2021-07-04</div>
<div class="t" style="left:814.00px;top:565.00px;font-size:14.39px;color:#4a4a4a;transform:scaleX(1.0081)">2021-07-04</div>
<div class="t" style="left:978.46px;top:565.00px;font-size:14.39px;color:#4a4a4a;transform:scaleX(0.9250)">C:\Program Files\Wi...</div>
<div class="t" style="left:1008.71px;top:656.00px;font-size:14.54px;color:#fff;transform:scaleX(0.8906)">Recover</div>
</body></html>
